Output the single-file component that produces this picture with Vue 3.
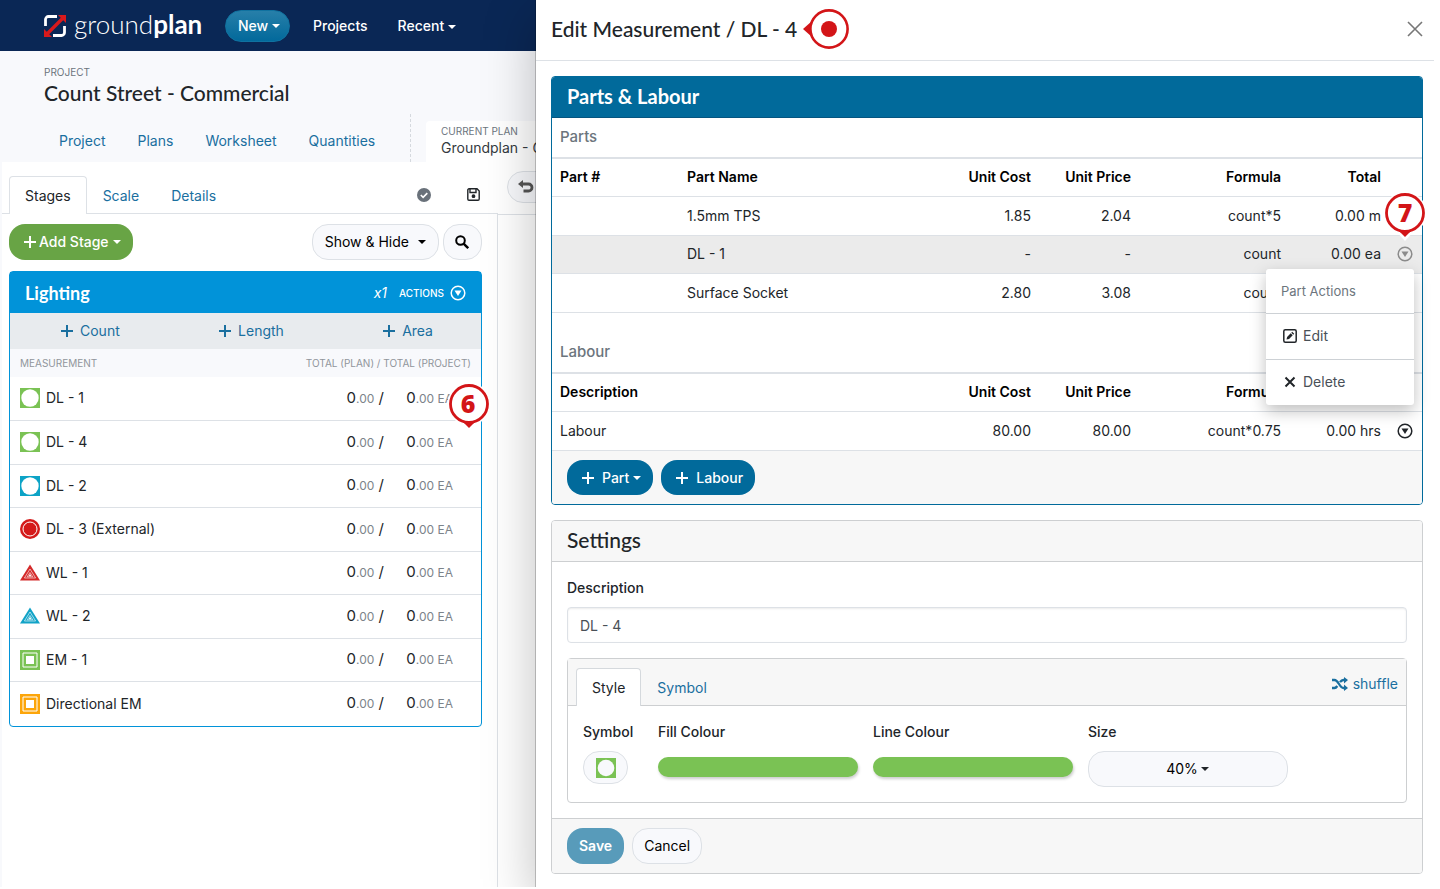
<script setup>
import { ref } from 'vue'

const measurements = [
  { name: 'DL - 1', shape: 'disc', color: '#7ac254' },
  { name: 'DL - 4', shape: 'disc', color: '#7ac254' },
  { name: 'DL - 2', shape: 'disc', color: '#0ca3c6' },
  { name: 'DL - 3 (External)', shape: 'target', color: '#d41a1a' },
  { name: 'WL - 1', shape: 'triangle', color: '#d42a2a' },
  { name: 'WL - 2', shape: 'triangle', color: '#12a3c7' },
  { name: 'EM - 1', shape: 'square', color: '#7ac254' },
  { name: 'Directional EM', shape: 'square', color: '#fca50a' },
]
const parts = [
  { name: '1.5mm TPS', cost: '1.85', price: '2.04', formula: 'count*5', total: '0.00 m' },
  { name: 'DL - 1', cost: '-', price: '-', formula: 'count', total: '0.00 ea', open: true },
  { name: 'Surface Socket', cost: '2.80', price: '3.08', formula: 'count', total: '' },
]
const description = ref('DL - 4')
const size = ref('40%')
</script>

<template>
  <div class="app">
    <header class="topbar">
      <a href="#" class="logo" aria-label="groundplan">
        <svg class="logo-mark" viewBox="0 0 22 22" aria-hidden="true">
          <path d="M1.500 11V4.500a3 3 0 0 1 3-3H13M20.500 11v6.500a3 3 0 0 1-3 3H9" fill="none" stroke="#fff" stroke-width="2.800" />
          <path d="M3 19 19 3" stroke="#d9191c" stroke-width="3.400" />
          <path d="M14 0h8v8zM0 14v8h8z" fill="#d9191c" />
        </svg>
        <span class="logo-text">ground<b>plan</b></span>
      </a>
      <button class="pill new">New<i class="caret"></i></button>
      <a href="#" class="toplink">Projects</a>
      <button class="toplink">Recent<i class="caret"></i></button>
    </header>

    <section class="project">
      <small class="eyebrow">PROJECT</small>
      <h1>Count Street - Commercial</h1>
      <nav class="project-nav">
        <div class="links">
          <a href="#">Project</a><a href="#">Plans</a><a href="#">Worksheet</a><a href="#">Quantities</a>
        </div>
        <a href="#" class="plan-tab">
          <small class="eyebrow">CURRENT PLAN</small>
          <span>Groundplan - G</span>
        </a>
      </nav>
    </section>

    <main class="workspace">
      <aside class="side">
        <nav class="tabs">
          <a href="#" class="tab active">Stages</a>
          <a href="#" class="tab">Scale</a>
          <a href="#" class="tab">Details</a>
          <button class="icon-btn push" aria-label="Saved">
            <svg viewBox="0 0 14 14" width="14" height="14"><circle cx="7" cy="7" r="7" fill="#69717a" /><path d="m3.800 7 2.300 2.300 4.200-4.200" fill="none" stroke="#fff" stroke-width="1.600" /></svg>
          </button>
          <button class="icon-btn" aria-label="Save plan">
            <svg viewBox="0 0 13 13" width="13" height="13" fill="none" stroke="#212529" stroke-width="1.400"><path d="M.8 2A1.200 1.200 0 0 1 2 .8h8L12.200 3v8a1.200 1.200 0 0 1-1.200 1.200H2A1.200 1.200 0 0 1 .8 11zM3 1v3.500h6V1" /><circle cx="6.500" cy="8.200" r="1.200" fill="#212529" /></svg>
          </button>
        </nav>

        <div class="side-body">
          <div class="side-actions">
            <button class="pill green">
              <svg class="plus" viewBox="0 0 14 14"><path d="M7 1v12M1 7h12" /></svg>Add Stage<i class="caret"></i>
            </button>
            <button class="pill light show push">Show &amp; Hide<i class="caret wide"></i></button>
            <button class="pill light search" aria-label="Search">
              <svg viewBox="0 0 14 14" width="14" height="14" fill="none" stroke="#000" stroke-width="2"><circle cx="5.500" cy="5.500" r="4.300" /><path d="m8.600 8.600 4.600 4.600" stroke-width="2.400" /></svg>
            </button>
          </div>

          <section class="stage">
            <header class="stage-head">
              <h2>Lighting</h2>
              <em>x1</em>
              <button class="stage-menu">
                <span>ACTIONS</span>
                <svg viewBox="0 0 16 16" width="16" height="16"><circle cx="8" cy="8" r="6.800" fill="none" stroke="currentColor" stroke-width="1.500" /><path d="M4.500 5.500h7L8 11z" fill="currentColor" /></svg>
              </button>
            </header>
            <div class="stage-add">
              <button v-for="kind in ['Count', 'Length', 'Area']" :key="kind">
                <svg class="plus" viewBox="0 0 14 14"><path d="M7 1v12M1 7h12" /></svg>{{ kind }}
              </button>
            </div>
            <table class="measures">
              <thead>
                <tr><th>MEASUREMENT</th><th class="num" colspan="2">TOTAL (PLAN) / TOTAL (PROJECT)</th></tr>
              </thead>
              <tbody>
                <tr v-for="(m, i) in measurements" :key="m.name">
                  <td>
                    <div class="measure">
                      <svg viewBox="0 0 20 20" width="20" height="20" :fill="m.color" aria-hidden="true">
                        <template v-if="m.shape === 'disc'"><path d="M0 0h20v20H0z" /><circle cx="10" cy="10" r="8.700" fill="#fff" /></template>
                        <template v-else-if="m.shape === 'target'"><circle cx="10" cy="10" r="10" /><circle cx="10" cy="10" r="7" fill="none" stroke="#fff" stroke-width="1" /></template>
                        <template v-else-if="m.shape === 'triangle'"><path d="M10 1.500 20 17.500H0z" /><path d="M10 6 15.600 15H4.400zM10 9.500 12.800 13.800H7.200z" fill="none" stroke="#fff" stroke-width=".6" /><path d="m10 10.800 1.400 2.400H8.600z" fill="#fff" /></template>
                        <template v-else><path d="M0 0h20v20H0z" /><path d="M3 3h14v14H3z" fill="none" stroke="#fff" stroke-width="1" /><path d="M6 6h8v8H6z" fill="#fff" /></template>
                      </svg>
                      <span>{{ m.name }}</span>
                    </div>
                  </td>
                  <td class="num plan-total">0<small>.00</small> /</td>
                  <td class="num project-total">
                    0<small>.00 EA</small>
                    <svg v-if="i === 0" class="pin pin-list" viewBox="0 0 44 50" aria-hidden="true">
                      <circle cx="22" cy="22" r="21.500" fill="#fff" />
                      <path d="m14 38 8 8 8-8z" fill="#d31518" />
                      <circle cx="22" cy="22" r="18.500" fill="#fff" stroke="#d31518" stroke-width="2.800" />
                      <text x="21" y="31">6</text>
                    </svg>
                  </td>
                </tr>
              </tbody>
            </table>
          </section>
        </div>
      </aside>
      <div class="canvas">
        <div class="canvas-tools">
          <button class="undo" aria-label="Undo">
            <svg viewBox="0 0 16 14" width="16" height="14"><path d="M4 4h6.500a3.500 3.500 0 0 1 0 7H5.500" fill="none" stroke="#555" stroke-width="2.800" /><path d="M0 4 5 0v8z" fill="#555" /></svg>
          </button>
        </div>
      </div>
    </main>

    <div class="drawer" role="dialog" aria-labelledby="drawer-title">
      <header class="drawer-head">
        <h2 id="drawer-title">Edit Measurement / DL - 4</h2>
        <svg class="marker" viewBox="0 0 46 40" width="46" height="40" aria-hidden="true">
          <path d="M0 20 9 12v16z" fill="#d31518" />
          <circle cx="26" cy="20" r="18.600" fill="#fff" stroke="#d31518" stroke-width="2.600" />
          <circle cx="26" cy="20" r="8" fill="#d31518" />
        </svg>
        <button class="close" aria-label="Close">
          <svg viewBox="0 0 16 16" width="16" height="16"><path d="m1 1 14 14M15 1 1 15" stroke="#777" stroke-width="1.600" /></svg>
        </button>
      </header>

      <div class="drawer-body">
        <section class="card blue">
          <h3 class="card-head">Parts &amp; Labour</h3>
          <h4>Parts</h4>
          <table class="items">
            <thead>
              <tr>
                <th class="c-no">Part #</th><th>Part Name</th><th class="num c-m">Unit Cost</th><th class="num c-m">Unit Price</th>
                <th class="num c-l">Formula</th><th class="num c-m">Total</th><th class="c-s"></th>
              </tr>
            </thead>
            <tbody>
              <tr v-for="p in parts" :key="p.name" :class="{ open: p.open }">
                <td></td><td>{{ p.name }}</td><td class="num">{{ p.cost }}</td><td class="num">{{ p.price }}</td>
                <td class="num">{{ p.formula }}</td><td class="num">{{ p.total }}</td>
                <td class="act">
                  <button v-if="p.open" class="row-btn dim" aria-label="Part actions">
                    <svg viewBox="0 0 16 16" width="16" height="16"><circle cx="8" cy="8" r="6.800" fill="none" stroke="currentColor" stroke-width="1.500" /><path d="M4.500 5.500h7L8 11z" fill="currentColor" /></svg>
                  </button>
                  <svg v-if="p.open" class="pin pin-row" viewBox="0 0 44 50" aria-hidden="true">
                    <path d="m11 38 11 12 11-12z" fill="#fff" />
                    <circle cx="22" cy="22" r="21.500" fill="#fff" />
                    <path d="m14 38 8 8 8-8z" fill="#d31518" />
                    <circle cx="22" cy="22" r="18.500" fill="#fff" stroke="#d31518" stroke-width="2.800" />
                    <text x="22" y="31">7</text>
                  </svg>
                  <div v-if="p.open" class="menu" role="menu">
                    <p>Part Actions</p>
                    <button role="menuitem">
                      <svg viewBox="0 0 14 14" width="14" height="14"><rect x=".8" y=".8" width="12.400" height="12.400" rx="1.500" fill="none" stroke="#212529" stroke-width="1.500" /><path d="m3.500 10.500.6-2.600 3.600-3.600 2 2-3.600 3.600zM8.300 3.700l.9-.9 2 2-.9.9z" fill="#212529" /></svg>Edit
                    </button>
                    <button role="menuitem">
                      <svg viewBox="0 0 14 14" width="14" height="14"><path d="m2.500 2.500 9 9M11.500 2.500l-9 9" stroke="#212529" stroke-width="2" /></svg>Delete
                    </button>
                  </div>
                </td>
              </tr>
            </tbody>
          </table>
          <h4 class="spaced">Labour</h4>
          <table class="items">
            <thead>
              <tr>
                <th>Description</th><th class="num c-m">Unit Cost</th><th class="num c-m">Unit Price</th>
                <th class="num c-l">Formula</th><th class="num c-m">Total</th><th class="c-s"></th>
              </tr>
            </thead>
            <tbody>
              <tr>
                <td>Labour</td><td class="num">80.00</td><td class="num">80.00</td><td class="num">count*0.75</td><td class="num">0.00 hrs</td>
                <td class="act">
                  <button class="row-btn" aria-label="Labour actions">
                    <svg viewBox="0 0 16 16" width="16" height="16"><circle cx="8" cy="8" r="6.800" fill="none" stroke="currentColor" stroke-width="1.500" /><path d="M4.500 5.500h7L8 11z" fill="currentColor" /></svg>
                  </button>
                </td>
              </tr>
            </tbody>
          </table>
          <footer class="card-foot">
            <button class="pill navy"><svg class="plus" viewBox="0 0 14 14"><path d="M7 1v12M1 7h12" /></svg>Part<i class="caret"></i></button>
            <button class="pill navy"><svg class="plus" viewBox="0 0 14 14"><path d="M7 1v12M1 7h12" /></svg>Labour</button>
          </footer>
        </section>

        <section class="card">
          <h3 class="card-head">Settings</h3>
          <div class="settings">
            <label for="desc">Description</label>
            <input id="desc" v-model="description" type="text" />
            <div class="style-box">
              <div class="style-tabs">
                <a href="#" class="tab active">Style</a>
                <a href="#" class="tab">Symbol</a>
                <a href="#" class="shuffle">
                  <svg viewBox="0 0 16 14" width="16" height="14"><path d="M0 3h2.500c4 0 5 8 9 8H13M0 11h2.500c1.200 0 2-.8 2.800-2M8 5.200C8.900 3.900 9.900 3 11.500 3H13" fill="none" stroke="currentColor" stroke-width="2.300" /><path d="m12 0 4 3-4 3.500zM12 7.500l4 3.500-4 3z" fill="currentColor" /></svg>shuffle
                </a>
              </div>
              <div class="style-fields">
                <div class="field symbol">
                  <label for="sym">Symbol</label>
                  <button id="sym" class="symbol-btn">
                    <svg viewBox="0 0 20 20" width="20" height="20"><path d="M0 0h20v20H0z" fill="#7ac254" /><circle cx="10" cy="10" r="8.300" fill="#f8f9fc" /></svg>
                  </button>
                </div>
                <div class="field"><label for="fill">Fill Colour</label><button id="fill" class="swatch"></button></div>
                <div class="field"><label for="line">Line Colour</label><button id="line" class="swatch"></button></div>
                <div class="field">
                  <label for="size">Size</label>
                  <div class="select">
                    <select id="size" v-model="size"><option>20%</option><option>40%</option><option>60%</option></select>
                    <i class="caret"></i>
                  </div>
                </div>
              </div>
            </div>
          </div>
          <footer class="card-foot bordered">
            <button class="pill save">Save</button>
            <button class="pill light">Cancel</button>
          </footer>
        </section>
      </div>
    </div>
  </div>
</template>

<style>
body {
  background: #fff;
}
</style>

<style scoped>
.app {
  position: relative;
  display: flex;
  flex-direction: column;
  min-height: calc(100vh - 2px);
  margin-right: 6px;
  overflow: hidden;
  font-family: Inter, "Liberation Sans", sans-serif;
  font-size: 14px;
  line-height: 20px;
  color: #212529;
}
.app *,
.app *::before {
  box-sizing: border-box;
}
button,
input,
select {
  font: inherit;
  color: inherit;
  border: 0;
  background: none;
  padding: 0;
  margin: 0;
}
a {
  color: #1a6f9f;
  text-decoration: none;
}
h1, h2, h3, h4, p {
  margin: 0;
  font-weight: 500;
}
h1, h2, h3 {
  font-family: Lato, "Liberation Sans", sans-serif;
  font-size: 21px;
  line-height: 26px;
}
.caret {
  display: inline-block;
  margin-left: 4px;
  border: 4px solid transparent;
  border-top-color: currentColor;
  border-bottom: 0;
  vertical-align: middle;
}
.caret.wide {
  margin-left: 9px;
}
.plus {
  width: 14px;
  height: 14px;
  fill: none;
  stroke: currentColor;
  stroke-width: 2;
}
.push {
  margin-left: auto;
}
.pill {
  display: inline-flex;
  align-items: center;
  height: 36px;
  padding: 0 12px;
  border-radius: 16px;
  font-weight: 500;
  color: #fff;
}
.pill.light {
  padding: 0 11px;
  border: 1px solid #dde1e6;
  background: #f8f9fc;
  color: #000;
  font-weight: 400;
}
.pill.show {
  padding: 0 12px;
}

/* Top bar */
.topbar {
  display: flex;
  align-items: center;
  height: 51px;
  padding-left: 44px;
  background: #0a2755;
  color: #fff;
}
.logo {
  display: flex;
  align-items: center;
  gap: 8px;
  width: 181px;
  color: #fff;
}
.logo-mark {
  width: 22px;
  height: 22px;
}
.logo-text {
  font-family: Lato, sans-serif;
  font-size: 26px;
  line-height: 36px;
  padding-bottom: 4px;
  font-weight: 300;
}
.logo-text b {
  font-weight: 700;
}
.new {
  width: 65px;
  height: 32px;
  margin-right: 8px;
  border: 1px solid #1072a0;
  background: linear-gradient(#277fa9, #02699b);
}
.toplink {
  padding: 0 15px;
  color: #fff;
  font-weight: 500;
}

/* Project header */
.project {
  padding: 13px 0 0 44px;
  background: #f8f9fc;
}
.eyebrow {
  display: block;
  font-size: 10px;
  line-height: 16px;
  color: #6c757d;
}
.project-nav {
  display: flex;
  align-items: flex-end;
  margin-top: 8px;
}
.links {
  display: flex;
  gap: 32px;
  width: 367px;
  height: 48px;
  padding: 17px 0 0 15px;
  border-right: 1px dashed #d5d9de;
}
.plan-tab {
  margin-left: 15px;
  height: 41px;
  min-width: 112px;
  padding: 3px 0 0 15px;
  border-radius: 4px 4px 0 0;
  background: #fff;
  color: #343a40;
  white-space: nowrap;
}
.plan-tab .eyebrow {
  line-height: 14px;
}
.plan-tab span {
  line-height: 18px;
}

/* Workspace */
.workspace {
  display: flex;
  flex: 1;
  border-left: 2px solid #f8f9fc;
}
.side {
  display: flex;
  flex-direction: column;
  width: 496px;
}
.tabs {
  display: flex;
  align-items: flex-end;
  height: 52px;
  padding-left: 7px;
  border-bottom: 1px solid #dde1e6;
}
.tab {
  height: 37px;
  padding: 9px 15px 0;
  border: 1px solid transparent;
  border-bottom: 0;
}
.tab.active {
  height: 38px;
  margin-bottom: -1px;
  border-color: #dde1e6;
  border-radius: 4px 4px 0 0;
  background: #fff;
  color: #212529;
}
.icon-btn {
  display: flex;
  align-items: center;
  height: 37px;
  padding: 0 18px;
}
.side-body {
  flex: 1;
  padding: 10px 15px 0 7px;
  border-right: 1px solid #dde1e6;
}
.side-actions {
  display: flex;
  gap: 4px;
}
.green {
  padding: 0 12px 0 14px;
  background: #68a445;
}
.green .plus {
  margin-right: 2px;
}
.search {
  width: 39px;
}
.stage {
  margin-top: 11px;
  border: 1px solid #0193d9;
  border-radius: 4px;
}
.stage-head {
  display: flex;
  align-items: center;
  height: 41px;
  padding: 0 15px;
  background: #0193d9;
  color: #fff;
}
.stage-head h2 {
  flex: 1;
  font-size: 18px;
  font-weight: 700;
}
.stage-menu {
  display: flex;
  align-items: center;
  gap: 6px;
  margin-left: 12px;
  font-size: 10px;
  font-weight: 500;
}
.stage-add {
  display: flex;
  justify-content: space-between;
  height: 36px;
  padding: 0 48px 0 50px;
  background: #e8ebee;
}
.stage-add button {
  display: flex;
  align-items: center;
  gap: 6px;
  color: #1a6f9f;
}
table {
  width: 100%;
  border-collapse: collapse;
}
th,
td {
  padding: 0;
  text-align: left;
}
.num {
  text-align: right;
}
.measures th {
  height: 28px;
  padding: 0 10px;
  background: #f8f9fc;
  color: #90959b;
  font-size: 10px;
  font-weight: 400;
}
.measures td {
  height: 43px;
  padding: 0 10px;
  border-bottom: 1px solid #dde1e6;
}
.measures tr:nth-child(even) td {
  height: 44px;
}
.measures tr:last-child td {
  height: 45px;
  border-bottom: 0;
}
.measure {
  display: flex;
  align-items: center;
  gap: 6px;
}
.measures small {
  font-size: 12px;
  color: #7c838a;
}
.measures .plan-total,
.measures .project-total {
  font-size: 15px;
  white-space: nowrap;
}
.measures .plan-total {
  padding-right: 0;
}
.measures .project-total {
  position: relative;
  width: 97px;
  padding-right: 28px;
}
.pin {
  position: absolute;
  z-index: 2;
  width: 44px;
  height: 50px;
}
.pin text {
  font-family: "Open Sans", sans-serif;
  font-size: 25px;
  font-weight: 800;
  text-anchor: middle;
  fill: #d31518;
}
.pin-list {
  top: 5px;
  right: -10px;
}
.pin-row {
  top: -45px;
  right: -5px;
}
.canvas {
  flex: 1;
}
.canvas-tools {
  height: 53px;
  padding: 9px;
  border-bottom: 1px solid #dde1e6;
}
.undo {
  display: flex;
  align-items: center;
  width: 60px;
  height: 32px;
  padding-left: 10px;
  border: 1px solid #dde1e6;
  border-radius: 16px;
  background: #f8f9fc;
}

/* Drawer */
.drawer {
  position: absolute;
  top: 0;
  right: 0;
  bottom: 0;
  left: 535px;
  border-left: 1px solid rgba(0, 0, 0, 0.2);
  background: #fff;
  background-clip: padding-box;
  box-shadow: 0 16px 48px rgba(0, 0, 0, 0.25);
}
.drawer-head {
  display: flex;
  align-items: center;
  height: 61px;
  padding: 0 11px 2px 15px;
  border-bottom: 1px solid #dde1e6;
}
.marker {
  margin-left: 6px;
}
.close {
  display: flex;
  margin-left: auto;
}
.drawer-body {
  display: flex;
  flex-direction: column;
  gap: 15px;
  padding: 15px 11px 12px 15px;
}
.card {
  border: 1px solid #cdcfd1;
  border-radius: 4px;
}
.card-head {
  height: 41px;
  padding: 6px 15px;
  border-bottom: 1px solid #cdcfd1;
  border-radius: 3px 3px 0 0;
  background: #f7f7f7;
}
.blue {
  border-color: #016a9b;
}
.blue .card-head {
  border-bottom-color: #055580;
  background: #016a9b;
  color: #fff;
  font-size: 20px;
  font-weight: 700;
}
h4 {
  height: 39px;
  padding: 9px 8px 0;
  font-size: 15px;
  color: #6c757d;
}
h4.spaced {
  height: 59px;
  padding-top: 29px;
}
.items {
  table-layout: fixed;
  border-top: 2px solid #dde1e6;
}
.items th,
.items td {
  height: 39px;
  padding: 0 8px;
  border-bottom: 1px solid #dde1e6;
}
.items th {
  height: 38px;
  font-weight: 600;
  color: #000;
}
.spaced + .items th {
  height: 39px;
}
.items .open td {
  height: 38px;
  background: #ebebeb;
}
.c-no { width: 127px; }
.c-m { width: 100px; }
.c-l { width: 150px; }
.c-s { width: 33px; }
.items .act {
  position: relative;
  padding: 0 8px;
}
.row-btn {
  display: flex;
}
.row-btn.dim {
  color: #8b8b8b;
}
.menu {
  position: absolute;
  z-index: 1;
  top: 33px;
  right: 8px;
  width: 148px;
  border-radius: 3px;
  background: #fff;
  box-shadow: 0 6px 16px rgba(0, 0, 0, 0.25);
}
.menu p {
  height: 44px;
  padding: 12px 15px;
  font-size: 13px;
  font-weight: 400;
  color: #6c757d;
}
.menu button {
  display: flex;
  align-items: center;
  gap: 6px;
  width: 100%;
  height: 46px;
  padding-left: 17px;
  border-top: 1px solid #cdd1d5;
  color: #495057;
}
.card-foot {
  display: flex;
  gap: 8px;
  padding: 9px 15px;
  border-radius: 0 0 3px 3px;
  background: #f7f7f7;
}
.card-foot.bordered {
  border-top: 1px solid #cdcfd1;
}
.navy {
  height: 35px;
  padding: 0 12px 0 14px;
  background: #016a9b;
}
.navy .plus {
  margin-right: 7px;
}
.save {
  background: #589bba;
  font-weight: 600;
}

/* Settings */
.settings {
  padding: 16px 15px 15px;
}
label {
  display: block;
  font-weight: 500;
}
input {
  display: block;
  width: 100%;
  height: 36px;
  margin: 9px 0 15px;
  padding: 0 12px;
  border: 1px solid #dde1e6;
  border-radius: 4px;
  box-shadow: inset 0 1px 2px rgba(0, 0, 0, 0.08);
  color: #495057;
}
.style-box {
  border: 1px solid #cdcfd1;
  border-radius: 4px;
}
.style-tabs {
  display: flex;
  align-items: flex-end;
  height: 47px;
  padding: 0 8px;
  border-bottom: 1px solid #cdcfd1;
  background: #f7f7f7;
}
.style-tabs .tab.active {
  border-color: #d5d9dd;
}
.shuffle {
  display: flex;
  align-items: center;
  gap: 5px;
  margin: 0 0 11px auto;
}
.style-fields {
  display: flex;
  gap: 15px;
  padding: 16px 15px 15px;
}
.field {
  width: 200px;
}
.field.symbol {
  width: 60px;
}
.symbol-btn {
  display: flex;
  align-items: center;
  justify-content: center;
  width: 45px;
  height: 33px;
  margin-top: 9px;
  border: 1px solid #dde1e6;
  border-radius: 16px;
  background: #f8f9fc;
}
.swatch {
  display: block;
  width: 100%;
  height: 20px;
  margin-top: 15px;
  border-radius: 10px;
  background: #7ac254;
  box-shadow: 1px 2px 3px rgba(0, 0, 0, 0.2);
}
.select {
  position: relative;
  margin-top: 9px;
}
select {
  display: block;
  width: 100%;
  height: 36px;
  padding-right: 12px;
  border: 1px solid #dde1e6;
  border-radius: 16px;
  background: #f8f9fc;
  appearance: none;
  text-align-last: center;
  color: #000;
}
.select .caret {
  position: absolute;
  top: 16px;
  left: calc(50% + 9px);
}
</style>
